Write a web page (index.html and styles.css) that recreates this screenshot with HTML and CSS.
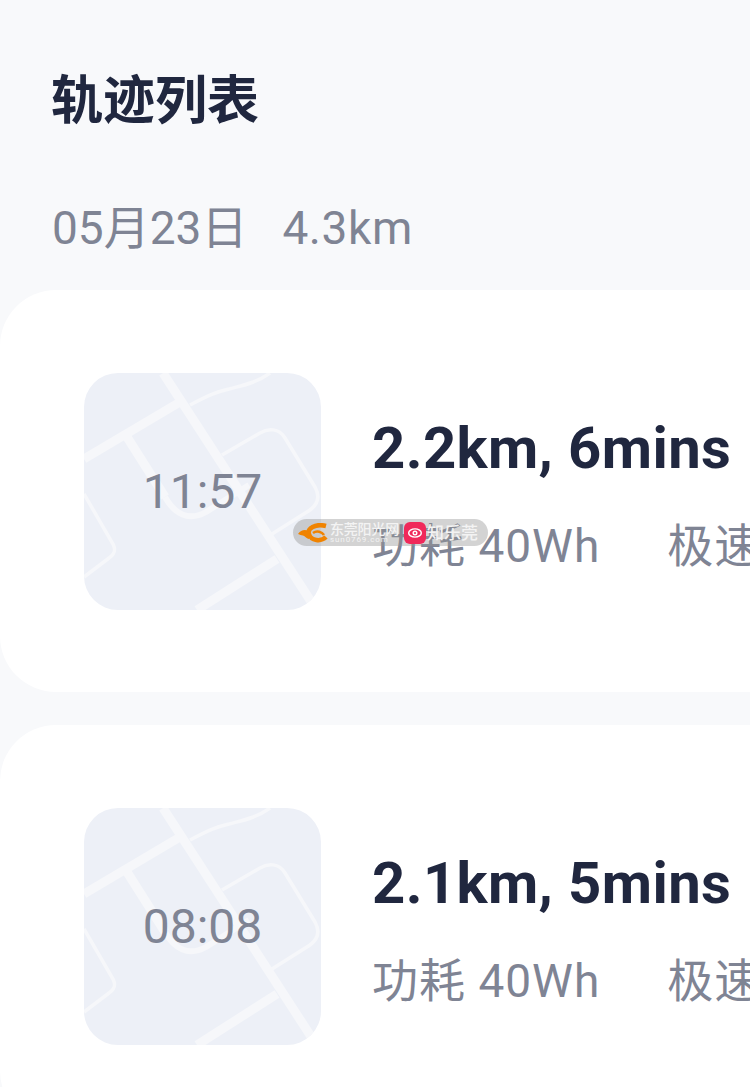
FILE: index.html
```html
<!DOCTYPE html>
<html lang="zh-CN">
<head>
<meta charset="utf-8">
<title>轨迹列表</title>
<link rel="stylesheet" href="styles.css">
</head>
<body>
<main class="page">
  <h1 class="title">轨迹列表</h1>
  <p class="day"><span>05月23日</span><span class="day-km">4.3km</span></p>
  <section class="card">
    <div class="thumb">
      <svg class="map" viewBox="0 0 237 237" aria-hidden="true">
        <g class="road-wide">
          <path d="M79 0L228 230"/>
          <path d="M0 86L96 29"/>
          <path d="M43 64L81 124"/>
          <path d="M113 237L193 186"/>
        </g>
        <g class="road-mid">
          <path d="M81 124C90 140 104 149 122 139L165 112"/>
        </g>
        <g class="road-thin">
          <path d="M106 32C125 22 132 19 145 16C160 12 172 10 186 0"/>
          <path d="M138 82L176 60C184 55 195 55 201 65L231 114C236 123 234 131 226 137L188 161"/>
          <path d="M0 121L29 171C32 177 31 181 25 185L0 204"/>
        </g>
      </svg>
      <span class="time">11:57</span>
    </div>
    <div class="info">
      <div class="stat">2.2km, 6mins</div>
      <div class="meta"><span>功耗 40Wh</span><span>极速 30km/h</span></div>
    </div>
  </section>
  <section class="card">
    <div class="thumb">
      <svg class="map" viewBox="0 0 237 237" aria-hidden="true">
        <g class="road-wide">
          <path d="M79 0L228 230"/>
          <path d="M0 86L96 29"/>
          <path d="M43 64L81 124"/>
          <path d="M113 237L193 186"/>
        </g>
        <g class="road-mid">
          <path d="M81 124C90 140 104 149 122 139L165 112"/>
        </g>
        <g class="road-thin">
          <path d="M106 32C125 22 132 19 145 16C160 12 172 10 186 0"/>
          <path d="M138 82L176 60C184 55 195 55 201 65L231 114C236 123 234 131 226 137L188 161"/>
          <path d="M0 121L29 171C32 177 31 181 25 185L0 204"/>
        </g>
      </svg>
      <span class="time">08:08</span>
    </div>
    <div class="info">
      <div class="stat">2.1km, 5mins</div>
      <div class="meta"><span>功耗 40Wh</span><span>极速 30km/h</span></div>
    </div>
  </section>
</main>
<div class="mark">
  <svg class="mark-logo" viewBox="0 0 30 20" aria-hidden="true">
    <path class="mark-ring" d="M28 3C17 0 9 6 11 11C13 18 23 19 28 14"/>
    <path class="mark-inner" d="M15 10C19 7 24 9 26 12"/>
    <path class="mark-wing" d="M0 11C3 6 9 6 12 9L11 16C9 16 7 13 5 12.5C3 12 2 12 0 11Z"/>
  </svg>
  <span class="mark-site"><span class="mark-cn">东莞阳光网</span><span class="mark-url">sun0769.com</span></span>
  <span class="mark-app">
    <svg viewBox="0 0 20 20" aria-hidden="true"><ellipse cx="10" cy="10" rx="7" ry="4.6"/><circle cx="10" cy="10" r="2"/></svg>
  </span>
  <span class="mark-name">知乐莞</span>
</div>
</body>
</html>
```
FILE: styles.css
```css
* { box-sizing: border-box; }
html, body { margin: 0; padding: 0; }
body {
  width: 750px;
  height: 1087px;
  overflow: hidden;
  position: relative;
  background: #f8f9fb;
  font-family: Roboto, "Noto Sans CJK SC", sans-serif;
}
.page { padding-top: 72px; height: 1087px; overflow: hidden; }
.title {
  margin: 0 0 0 51px;
  font-size: 52px;
  line-height: 60px;
  font-weight: 700;
  color: #20273f;
}
.day {
  margin: 71px 0 0 52px;
  display: flex;
  gap: 35px;
  font-size: 46px;
  line-height: 50px;
  color: #7f8494;
}
.day-km { letter-spacing: .6px; }
.card {
  margin: 37px 0 33px 0;
  width: 750px;
  height: 402px;
  padding: 83px 0 0 84px;
  display: flex;
  gap: 51px;
  overflow: hidden;
  background: #fff;
  border-radius: 56px 0 0 56px;
}
.card + .card { margin-top: 0; }
.thumb {
  position: relative;
  flex: none;
  width: 237px;
  height: 237px;
  display: flex;
  align-items: center;
  justify-content: center;
  border-radius: 34px;
  overflow: hidden;
  background: #edf0f7;
}
.map { position: absolute; inset: 0; width: 100%; height: 100%; }
.road-wide, .road-mid, .road-thin { fill: none; stroke: #f6f7fa; }
.road-wide { stroke-width: 9; }
.road-mid { stroke-width: 6; }
.road-thin { stroke-width: 3.5; }
.time {
  position: relative;
  font-size: 48px;
  line-height: 50px;
  color: #7f8494;
}
.info { padding-top: 44px; white-space: nowrap; }
.stat {
  font-size: 58px;
  line-height: 62px;
  font-weight: 700;
  letter-spacing: .4px;
  color: #20273f;
}
.meta {
  margin-top: 42px;
  display: flex;
  gap: 67px;
  font-size: 46px;
  line-height: 50px;
  letter-spacing: 1px;
  color: #7f8494;
}
.mark {
  position: absolute;
  left: 293px;
  top: 519px;
  width: 195px;
  height: 27px;
  display: flex;
  align-items: center;
  padding-left: 5px;
  border-radius: 14px;
  background: rgba(150, 150, 150, 0.42);
  color: #f3f3f3;
}
.mark-logo { width: 30px; height: 20px; flex: none; }
.mark-ring, .mark-inner { fill: none; stroke: #f08300; }
.mark-ring { stroke-width: 4.5; }
.mark-inner { stroke-width: 2.5; }
.mark-wing { fill: #f08300; }
.mark-site { width: 74px; margin-left: 2px; display: flex; flex-direction: column; }
.mark-cn { font-size: 14px; line-height: 14px; letter-spacing: -.2px; font-weight: 500; }
.mark-url { font-size: 8px; line-height: 8px; letter-spacing: .9px; }
.mark-app {
  width: 22px;
  height: 22px;
  flex: none;
  border-radius: 6px;
  background: #f0295a;
  display: flex;
  align-items: center;
  justify-content: center;
}
.mark-app svg { width: 18px; height: 18px; fill: none; stroke: #fff; stroke-width: 1.6; }
.mark-name { margin-left: 1px; font-size: 17px; line-height: 20px; font-weight: 500; }
```
